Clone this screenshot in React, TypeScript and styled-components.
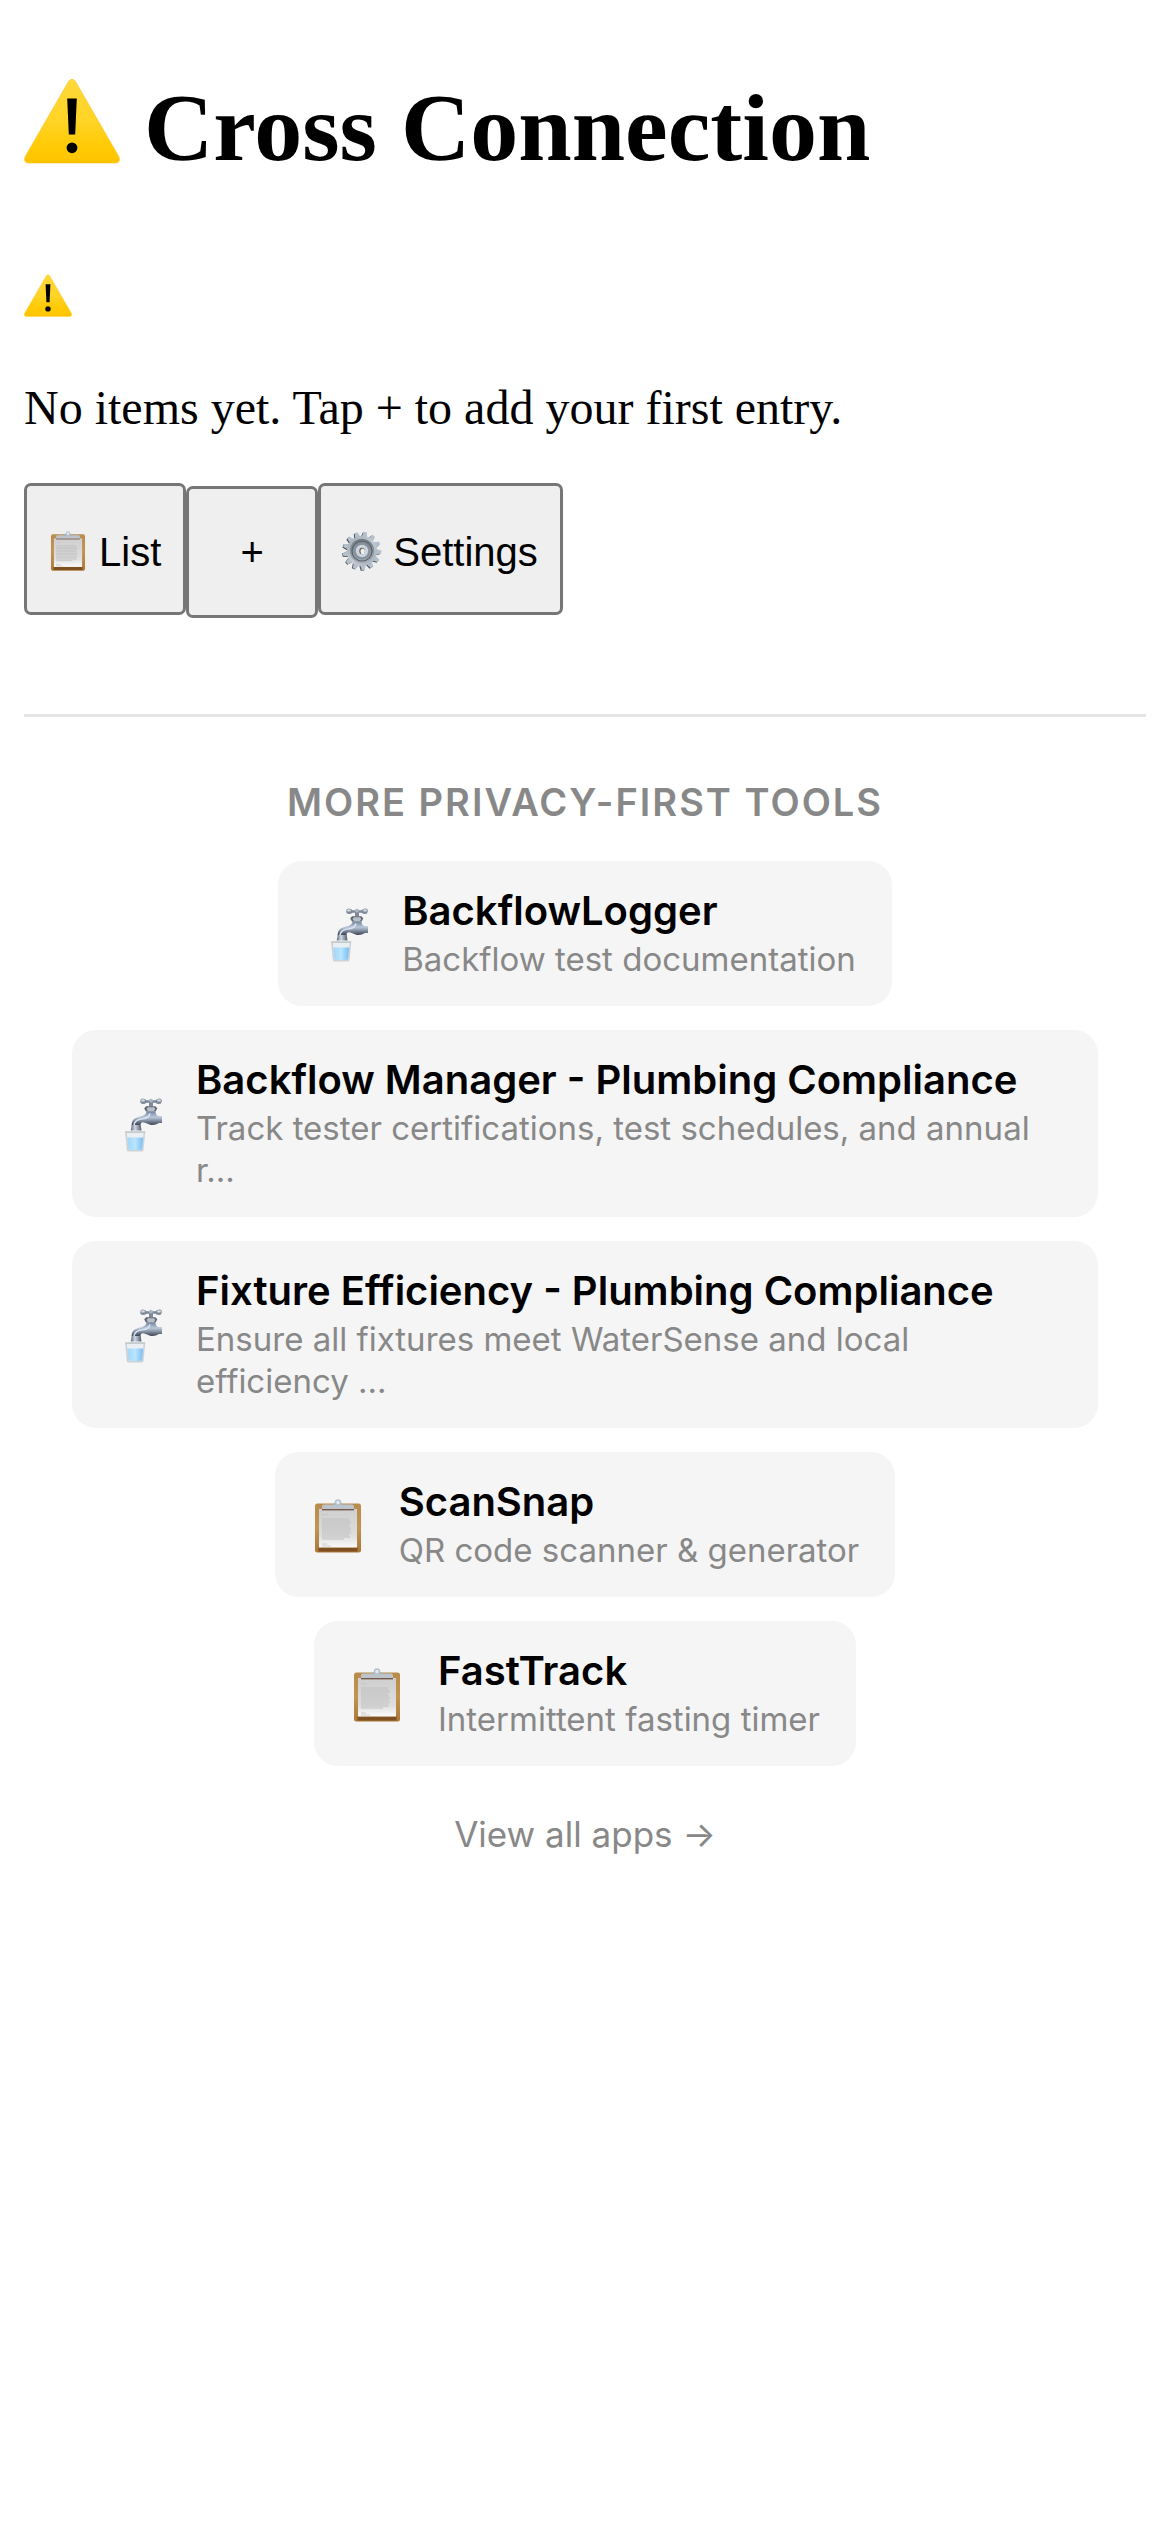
import React from "react";
import styled, { createGlobalStyle } from "styled-components";

const sans = `Inter, "Liberation Sans", sans-serif`;

const GlobalStyle = createGlobalStyle`
  body {
    margin: 0;
    background: #fff;
    color: #000;
    font-family: "Liberation Serif", serif;
    font-size: 48px;
  }
`;

const Page = styled.div`
  display: flow-root;
  padding: 0 24px 48px;
`;

const Title = styled.h1`
  display: flex;
  align-items: center;
  gap: 24px;
  margin: 64px 0 68px;
  font-size: 96px;
  line-height: 128px;
  font-weight: 700;

  > svg {
    margin-bottom: 12px;
  }
`;

const Status = styled.p`
  display: flex;
  align-items: center;
  height: 72px;
  margin: 0;
`;

const EmptyMessage = styled.p`
  margin: 48px 0;
  line-height: 55px;
`;

const Toolbar = styled.nav`
  display: flex;
  align-items: baseline;
`;

const ToolButton = styled.button`
  box-sizing: border-box;
  min-width: 132px;
  height: 132px;
  padding: 0 22px;
  border: 3px solid #767676;
  border-radius: 7px;
  background: #efefef;
  color: #000;
  font: 40px "Liberation Sans", Arial, sans-serif;
`;

const ToolLabel = styled.span`
  display: block;
  padding-top: 6px;
  white-space: nowrap;
`;

const ToolIcon = styled.span`
  display: inline-flex;
  justify-content: center;
  width: 38px;
  height: 40px;
  margin-right: 12px;
  vertical-align: -5px;
`;

const Drawing = styled.svg<{ $size: number }>`
  display: block;
  flex: none;
  width: ${(p) => p.$size}px;
  height: ${(p) => p.$size}px;
`;

const More = styled.footer`
  display: flex;
  flex-direction: column;
  align-items: center;
  margin-top: 96px;
  padding: 60px 48px;
  border-top: 3px solid #e5e5e5;
  font-family: ${sans};
`;

const MoreHeading = styled.h2`
  margin: 0 0 34px;
  color: #888;
  font-size: 38px;
  line-height: 50px;
  font-weight: 600;
  letter-spacing: 2px;
  text-transform: uppercase;
`;

const Cards = styled.div`
  display: flex;
  flex-direction: column;
  align-items: center;
  gap: 24px;
`;

const Card = styled.a`
  display: flex;
  align-items: center;
  gap: 34px;
  padding: 28px 36px 26px;
  border-radius: 24px;
  background: #f5f5f5;
  color: #000;
  text-decoration: none;
`;

const CardText = styled.span`
  display: flex;
  flex-direction: column;
  gap: 6px;
`;

const CardName = styled.span`
  font-size: 40px;
  line-height: 43px;
  font-weight: 600;
`;

const CardNote = styled.span`
  color: #888;
  font-size: 33px;
  line-height: 42px;
`;

const AllApps = styled.a`
  margin-top: 46px;
  color: #888;
  font-size: 35px;
  line-height: 44px;
  text-decoration: none;
`;

function Warning({ size }: { size: number }) {
  return (
    <Drawing $size={size} viewBox="0 0 96 96" role="img" aria-label="Warning">
      <defs>
        <linearGradient id="sign" x1="0" y1="0" x2="0" y2="1">
          <stop offset="0" stopColor="#ffd83a" />
          <stop offset="0.5" stopColor="#ffd426" />
          <stop offset="0.8" stopColor="#ffca05" />
          <stop offset="1" stopColor="#ffc400" />
        </linearGradient>
      </defs>
      <path
        d="M44.500 7.500Q48 3 51.500 7.500L94.800 82.500Q97 88.600 91.500 89H4.500Q-1 88.600 1.200 82.500Z"
        fill="url(#sign)"
        stroke="#fdbd12"
        strokeOpacity="0.55"
        strokeWidth="1"
      />
      <path d="M43.200 24.500H52.800L51.200 60.500H44.800Z" fill="#000" />
      <circle cx="48" cy="73.800" r="5.400" fill="#000" />
    </Drawing>
  );
}

function Clipboard({ size }: { size: number }) {
  return (
    <Drawing $size={size} viewBox="0 0 54 54" aria-hidden="true">
      <defs>
        <linearGradient id="paper" x1="0" y1="0" x2="0" y2="1">
          <stop offset="0" stopColor="#cfcfd0" />
          <stop offset="0.7" stopColor="#dedede" />
          <stop offset="1" stopColor="#fafafa" />
        </linearGradient>
        <linearGradient id="board" x1="0" y1="0" x2="0" y2="1">
          <stop offset="0" stopColor="#b98b4b" />
          <stop offset="0.5" stopColor="#c29450" />
          <stop offset="1" stopColor="#aa7838" />
        </linearGradient>
      </defs>
      <rect x="4" y="4.500" width="46" height="49" rx="2.500" fill="url(#board)" />
      <rect x="7.500" y="48.500" width="39" height="4" fill="#7e4f20" />
      <rect x="8" y="10" width="38" height="38.500" fill="url(#paper)" />
      <path d="M11 15.700h6M11 45h5M11 47h9" stroke="#c2c2c2" strokeWidth="0.8" />
      <path
        d="M11 20h27M11 22h28M11 24h29M11 26h27M11 28h28M11 30h29M11 32h28M11 34h29M11 36h27M11 38h28M11 40h22"
        stroke="#bcbcbc"
        strokeWidth="0.9"
      />
      <rect x="11" y="9.800" width="32" height="1.600" fill="#77594c" />
      <path d="M11 10V7.500Q11 5.600 13 5.600H41Q43 5.600 43 7.500V10Z" fill="#bcc3ca" />
      <path d="M20 5.600Q23.500 5.300 24 3.500H30Q30.500 5.300 34 5.600Z" fill="#8fb2d4" />
      <circle cx="27" cy="3.500" r="2.500" fill="#e6e9ee" stroke="#b7c1cd" strokeWidth="1.500" />
    </Drawing>
  );
}

function Faucet() {
  return (
    <Drawing $size={54} viewBox="0 0 54 54" aria-hidden="true">
      <defs>
        <linearGradient id="pipe" x1="0" y1="0" x2="0" y2="1">
          <stop offset="0" stopColor="#71849f" />
          <stop offset="0.4" stopColor="#bac8da" />
          <stop offset="0.62" stopColor="#8b98aa" />
          <stop offset="1" stopColor="#333a48" />
        </linearGradient>
        <linearGradient id="metal" x1="0" y1="0" x2="1" y2="0">
          <stop offset="0" stopColor="#596679" />
          <stop offset="0.4" stopColor="#d0d9e5" />
          <stop offset="1" stopColor="#505966" />
        </linearGradient>
        <linearGradient id="water" x1="0" y1="0" x2="1" y2="0">
          <stop offset="0" stopColor="#a2d6f6" />
          <stop offset="0.5" stopColor="#b9e5ff" />
          <stop offset="1" stopColor="#79bdf0" />
        </linearGradient>
      </defs>
      <path
        d="M34.500 0.500Q37 0.500 38.500 2.300H47.500Q49 0.500 51.500 0.500Q54 0.800 53.800 3.400Q53.500 6 51 6Q49 5.900 47.500 4.700H45V8.500H41V4.700H38.500Q37 5.900 35 6Q32.300 5.800 32.200 3.200Q32.300 0.600 34.500 0.500Z"
        fill="#7e8896"
      />
      <ellipse cx="35" cy="2.400" rx="2" ry="1.200" fill="#d3dbe5" />
      <ellipse cx="51" cy="2.400" rx="2" ry="1.200" fill="#d3dbe5" />
      <circle cx="43" cy="2.700" r="1.900" fill="#aab6c7" />
      <path d="M38 8.300H47.500L49.300 10.500L47.500 13.600H38L36.200 10.500Z" fill="#5f6671" />
      <path d="M40 9.300H46L47.400 11L46 13H40L38.500 11Z" fill="#b8bfc8" />
      <path
        d="M38.500 13.500H47.500Q47.500 17.500 51 18.200H54V25H51Q47 27.500 42 26.700Q37 24.500 35 24.200Q32.500 24.200 32.500 27.500H23.500Q23.200 20.500 31 18.700Q38.500 17.500 38.500 13.500Z"
        fill="url(#pipe)"
      />
      <path d="M26 27Q26.500 21.500 35 20.700Q41 20 42 15.500" fill="none" stroke="#d9e3ef" strokeWidth="1.600" />
      <path d="M23.800 27H32.700L33.500 32.500H22.700Z" fill="url(#metal)" />
      <path d="M17 33.500H37.300L35.500 52Q35.400 53.500 33.500 53.500H20.600Q19 53.500 18.800 52Z" fill="#cdd2d6" />
      <path d="M18.800 35H35.600L34 51.500H20.400Z" fill="#e9eff3" />
      <path d="M19.200 39.500H35.200L34 51.500Q27 52.500 20.400 51.500Z" fill="url(#water)" />
      <path d="M17 34H37.300" stroke="#b9bec2" strokeWidth="0.8" />
    </Drawing>
  );
}

const teeth = Array.from({ length: 13 }, (_, i) => (i * 360) / 13);

function Gear({ size }: { size: number }) {
  return (
    <Drawing $size={size} viewBox="-20 -20 40 40" aria-hidden="true">
      <defs>
        <linearGradient id="rim" x1="0" y1="0" x2="1" y2="1">
          <stop offset="0" stopColor="#9ba7b0" />
          <stop offset="0.5" stopColor="#c3ccd5" />
          <stop offset="1" stopColor="#a3aebb" />
        </linearGradient>
        <linearGradient id="dish" x1="0" y1="0" x2="0" y2="1">
          <stop offset="0" stopColor="#747d85" />
          <stop offset="1" stopColor="#a6afb8" />
        </linearGradient>
      </defs>
      <g transform="translate(-0.900 0.600)" fill="#4f4744">
        {teeth.map((a) => (
          <path key={a} d="M-2.800 -14L-1.600 -19H1.600L2.800 -14Z" transform={`rotate(${a + 10})`} />
        ))}
      </g>
      {teeth.map((a) => (
        <path key={a} d="M-2.800 -14L-1.500 -19.300H1.500L2.800 -14Z" fill="#b3c0cf" transform={`rotate(${a + 10})`} />
      ))}
      <circle r="15" fill="url(#rim)" />
      <circle r="12.300" fill="url(#dish)" />
      <circle r="10" fill="none" stroke="#5b646c" strokeWidth="1.200" />
      <circle r="8.500" fill="#87919b" />
      <circle r="6.200" fill="#cbd5e0" />
      <ellipse rx="2.800" ry="3.300" fill="#786a5e" />
      <ellipse cx="0.700" cy="0.400" rx="2.100" ry="2.700" fill="#efefef" />
    </Drawing>
  );
}

const apps = [
  { name: "BackflowLogger", note: "Backflow test documentation", icon: "faucet" },
  {
    name: "Backflow Manager - Plumbing Compliance",
    note: "Track tester certifications, test schedules, and annual r...",
    icon: "faucet",
  },
  {
    name: "Fixture Efficiency - Plumbing Compliance",
    note: "Ensure all fixtures meet WaterSense and local efficiency ...",
    icon: "faucet",
  },
  { name: "ScanSnap", note: "QR code scanner & generator", icon: "clipboard" },
  { name: "FastTrack", note: "Intermittent fasting timer", icon: "clipboard" },
];

export default function App() {
  return (
    <>
      <GlobalStyle />
      <Page>
        <Title>
          <Warning size={96} />
          Cross Connection
        </Title>
        <Status>
          <Warning size={48} />
        </Status>
        <EmptyMessage>No items yet. Tap + to add your first entry.</EmptyMessage>
        <Toolbar>
          <ToolButton type="button">
            <ToolLabel>
              <ToolIcon>
                <Clipboard size={40} />
              </ToolIcon>
              List
            </ToolLabel>
          </ToolButton>
          <ToolButton type="button">+</ToolButton>
          <ToolButton type="button">
            <ToolLabel>
              <ToolIcon>
                <Gear size={40} />
              </ToolIcon>
              Settings
            </ToolLabel>
          </ToolButton>
        </Toolbar>
        <More>
          <MoreHeading>More privacy-first tools</MoreHeading>
          <Cards>
            {apps.map((app) => (
              <Card key={app.name} href="#">
                {app.icon === "faucet" ? <Faucet /> : <Clipboard size={54} />}
                <CardText>
                  <CardName>{app.name}</CardName>
                  <CardNote>{app.note}</CardNote>
                </CardText>
              </Card>
            ))}
          </Cards>
          <AllApps href="#">View all apps →</AllApps>
        </More>
      </Page>
    </>
  );
}
